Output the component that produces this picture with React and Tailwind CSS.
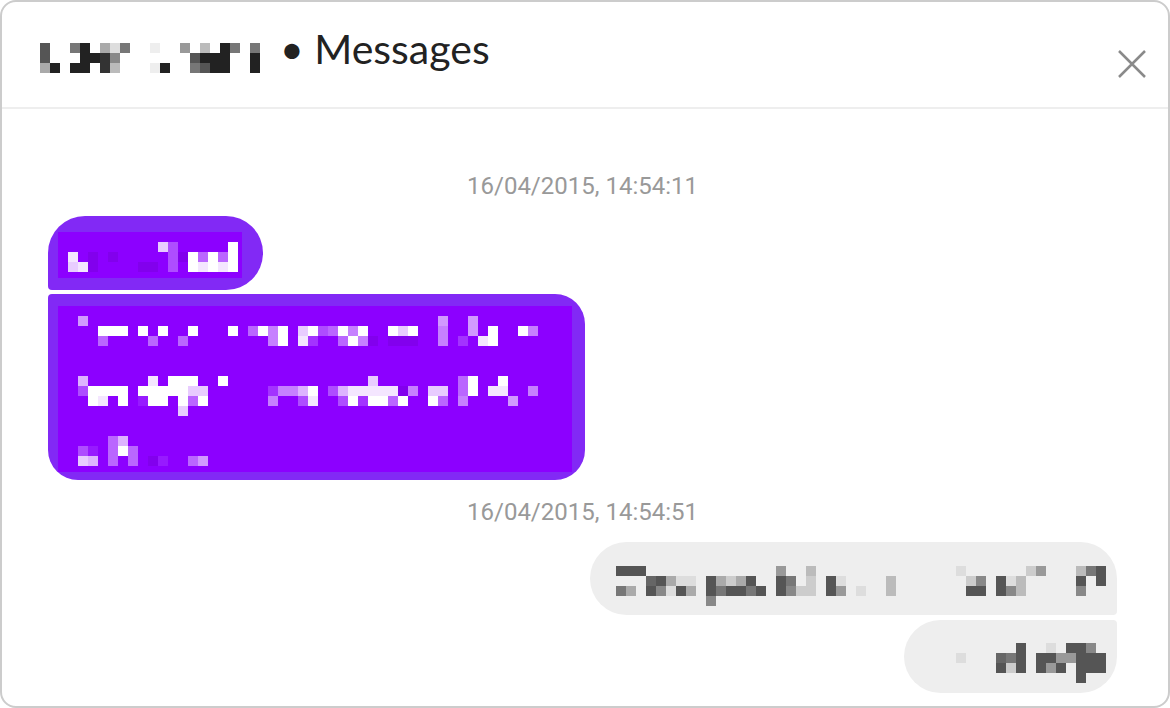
import React from 'react';

// censored text is drawn as pixel mosaics: each row is "col:value" tokens, ranges like "2-4:w"
const parseRow = (spec) => {
  const cells = [];
  spec.split(' ').filter(Boolean).forEach((tok) => {
    const [range, v] = tok.split(':');
    const [a, b] = range.split('-').map(Number);
    for (let c = a; c <= (b ?? a); c++) cells.push([c, v]);
  });
  return cells;
};

const purpleFill = (v) => {
  if (v === 'w') return 'rgba(255,255,255,1)';
  if (v === 'd') return 'rgba(60,0,110,0.12)';
  return `rgba(255,255,255,${Number(v) / 10})`;
};

const grayFill = (v) => `#${v}${v}${v}${v}${v}${v}`;

const Mosaic = ({ rows, width, height, ox = 0, oy = 0, fill, bg }) => (
  <svg width={width} height={height} className="block shrink-0">
    {bg && <rect width={width} height={height} fill={bg} />}
    {rows.map(([r, spec]) =>
      parseRow(spec).map(([c, v]) => (
        <rect key={`${r}-${c}`} x={ox + c * 10} y={oy + r * 10} width="10" height="10" fill={fill(v)} />
      ))
    )}
  </svg>
);

const headerRows = [
  [0, '0:5 3:7 4:2 6:a 7:d 8:7 11:e 14:9 16:b 18:2 19:7 21:7'],
  [1, '0:5 4:2 5:2 6:3 7:8 15:5 16:2 17:2 18:2 21:2'],
  [2, '0:a 1:2 3:2 4:2 6:3 7:b 11:e 12:2 15:7 16:5 17:2 18:2 21:2'],
];

const bubble1Rows = [
  [0, '9:8 10:3 16:w'],
  [1, '0:9 2:d 4:d 10:3 11:d 12:w 13:4 14:w 15:4 16:w'],
  [2, '0:8 1:9 2:d 7:d 8:d 10:3 12:w 13:9 14:w 15:9 16:w'],
];

const bubble2Rows = [
  [0, '0:6 36:6 39:6'],
  [1, '2-4:w 6:w 8:w 11:w 15:w 17:4 18:w 19:5 20:w 22:8 23:w 24:3 25:4 26:w 27:5 28:w 31:w 32:8 33:w 36:5 39:6 41:w 44:w 45:5'],
  [2, '2:4 7:4 10:4 19:5 20:w 22:9 23:2 26:4 27:w 28:5 29:d 31-33:d 36:5 38:2 40:9 41:w'],
  [6, '0:7 7:9 9-11:w 14:w 29:8 38:4 39:w 42:w'],
  [7, '0:3 1-4:w 6-10:w 11:8 12:8 19:2 20:5 21:5 22:7 23:w 25:3 26:7 27-31:9 32:d 33:5 35:8 36:8 38:4 39:w 41:9 42:9 45:5'],
  [8, '1:w 2:9 4:w 6:1 7:w 8:w 10:w 11:4 12:w 19:5 22:3 23:9 26:3 27:w 28:2 29:w 30:w 31:4 32:w 35:w 36:4 38:5 43:6'],
  [9, '10:8'],
  [12, '3:4 4:7'],
  [13, '0:3 1:1 3:4 4:w 5:4'],
  [14, '0:8 1:7 3:4 5:4 7:d 8:1 11:4 12:6'],
];

const bubble3Rows = [
  [0, '0-2:5 16:9 19:b 34:d 41:c 42:9 46:b 47:7 48:5'],
  [1, '3:6 4:5 5:a 6:d 7:d 9:5 10:a 11:c 12:a 13:5 14:e 16:5 17:7 19:c 21:5 22:d 23:e 27:b 35:c 36:8 38:5 39:d 40:b 46:5 48:5'],
  [2, '0:7 1:a 3:5 4:8 5:d 6:5 7:a 9:5 10:7 11:5 12:5 13:7 14:5 16:5 17:8 18:c 19:c 21:5 22:9 24:d 27:b 35:5 36:5 38:5 39:8 40:b 46:8'],
  [3, '9:8'],
];

const bubble4Rows = [
  [0, '3:e 6:5 9:d 11:5 12:5 13:8'],
  [1, '0:d 4:6 5:7 6:5 8:5 9:5 10:9 11:9 12:5 13:5 14:5'],
  [2, '4:5 5:c 6:5 8:5 9:9 10:5 12:5 13:5 14:5'],
  [3, '12:5'],
];

const Timestamp = ({ children }) => (
  <div className="text-center text-[24px] leading-[28px] text-[#999999] font-['Roboto',sans-serif]">{children}</div>
);

export default function App() {
  return (
    <div className="w-full h-[708px] bg-white">
      <div className="h-full border-2 border-[#cccccc] rounded-2xl overflow-hidden flex flex-col">
        <div className="h-[107px] shrink-0 border-b-2 border-[#eeeeee] flex items-start pl-[38px] pr-[22px] pt-[41px]">
          <Mosaic rows={headerRows} width={220} height={30} fill={grayFill} />
          <span className="ml-[20px] -mt-[16px] text-[41px] leading-[44px] text-[#222222] font-['Lato',sans-serif]">
            &bull; Messages
          </span>
          <button className="ml-auto mt-[7px] text-[#8a8a8a]">
            <svg width="28" height="28" viewBox="0 0 28 28" className="block">
              <path d="M1 1L27 27M27 1L1 27" stroke="currentColor" strokeWidth="2.5" fill="none" />
            </svg>
          </button>
        </div>

        <div className="flex flex-col pl-[46px] pr-[51px]">
          <div className="mt-[63px]">
            <Timestamp>16/04/2015, 14:54:11</Timestamp>
          </div>

          <div className="mt-[16px] self-start bg-[#8229f5] rounded-[37px] rounded-bl-[4px] pl-[10px] pt-[16px] pr-[21px] pb-[12px]">
            <Mosaic rows={bubble1Rows} width={184} height={46} ox={10} oy={10} fill={purpleFill} bg="#8c00ff" />
          </div>
          <div className="mt-[4px] self-start bg-[#8229f5] rounded-[30px] rounded-tl-[4px] pl-[10px] pt-[12px] pr-[13px] pb-[8px]">
            <Mosaic rows={bubble2Rows} width={514} height={166} ox={20} oy={10} fill={purpleFill} bg="#8c00ff" />
          </div>

          <div className="mt-[18px]">
            <Timestamp>16/04/2015, 14:54:51</Timestamp>
          </div>

          <div className="mt-[16px] self-end bg-[#eeeeee] rounded-[37px] rounded-br-[4px] pl-[26px] pt-[24px] pr-[11px] pb-[9px]">
            <Mosaic rows={bubble3Rows} width={490} height={40} fill={grayFill} />
          </div>
          <div className="mt-[5px] self-end bg-[#eeeeee] rounded-[37px] rounded-tr-[4px] pl-[52px] pt-[23px] pr-[11px] pb-[10px]">
            <Mosaic rows={bubble4Rows} width={150} height={40} fill={grayFill} />
          </div>
        </div>
      </div>
    </div>
  );
}
